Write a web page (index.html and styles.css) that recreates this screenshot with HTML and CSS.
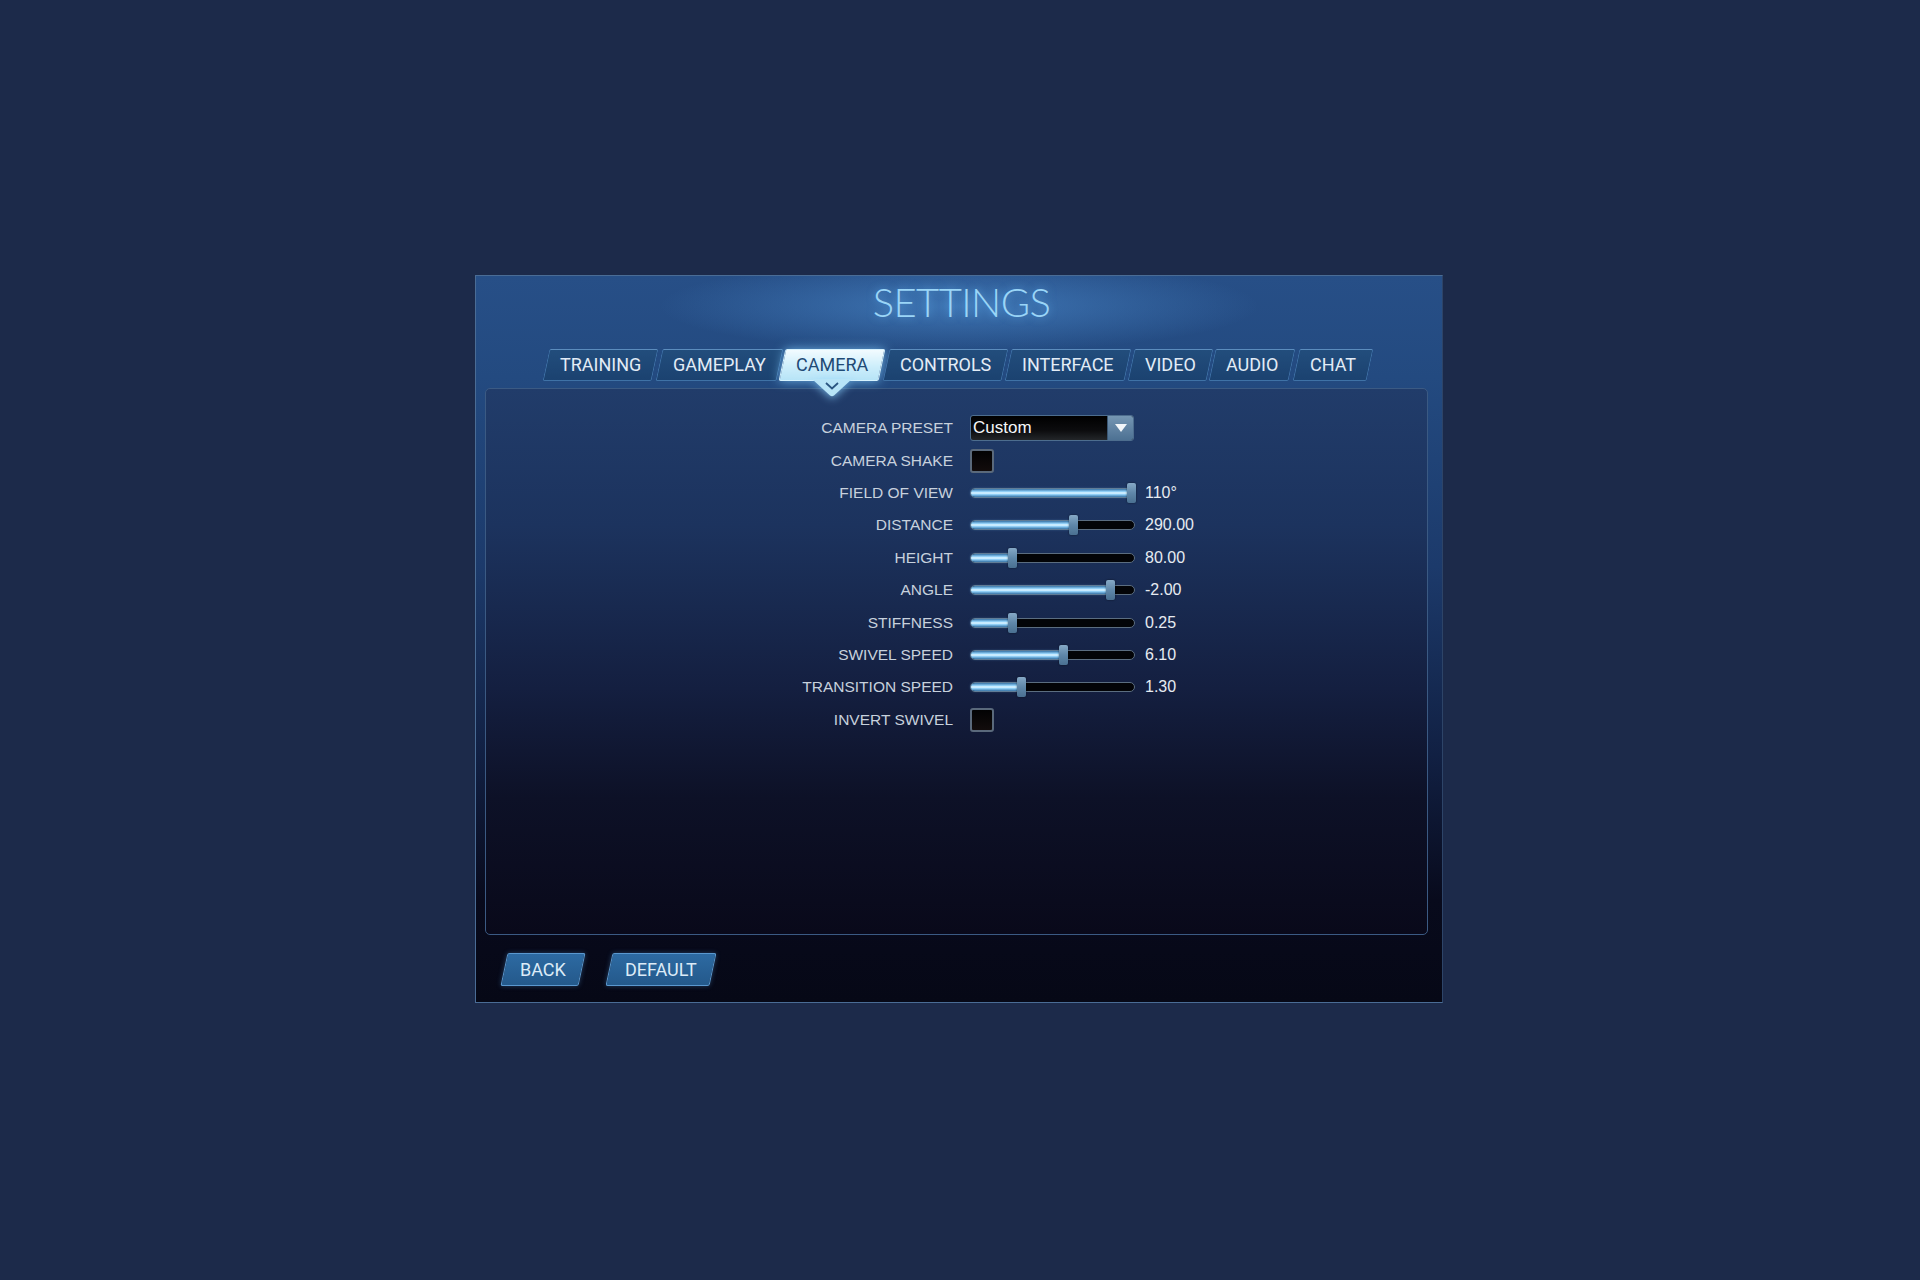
FILE: index.html
```html
<!DOCTYPE html>
<html lang="en">
<head>
<meta charset="utf-8">
<title>Settings</title>
<link rel="stylesheet" href="styles.css">
</head>
<body>
<div class="stage">
  <section class="panel">
    <header class="head">
      <h1 class="title">SETTINGS</h1>
    </header>
    <nav class="tabs">
      <div class="tab"><span class="tab-label">TRAINING</span></div>
      <div class="tab"><span class="tab-label">GAMEPLAY</span></div>
      <div class="tab active"><span class="tab-label">CAMERA<svg class="pointer" width="40" height="18" viewBox="0 0 40 18"><path d="M0 0 H40 L22 16.5 Q20 18 18 16.5 Z" fill="#b7e4f7"/><polyline points="14,4 20,9.5 26,4" fill="none" stroke="#2a5580" stroke-width="1.8"/></svg></span></div>
      <div class="tab"><span class="tab-label">CONTROLS</span></div>
      <div class="tab"><span class="tab-label">INTERFACE</span></div>
      <div class="tab"><span class="tab-label">VIDEO</span></div>
      <div class="tab"><span class="tab-label">AUDIO</span></div>
      <div class="tab"><span class="tab-label">CHAT</span></div>
    </nav>
    <div class="content">
      <div class="rows">
        <div class="row">
          <div class="label">CAMERA PRESET</div>
          <div class="select">
            <span class="select-text">Custom</span>
            <span class="select-btn"><svg width="12" height="8" viewBox="0 0 12 8"><path d="M0 0 H12 L6 8 Z" fill="#f2f6fa"/></svg></span>
          </div>
        </div>
        <div class="row">
          <div class="label">CAMERA SHAKE</div>
          <div class="check"></div>
        </div>
        <div class="row">
          <div class="label">FIELD OF VIEW</div>
          <div class="slider" style="--p:1"><div class="fill"></div><div class="thumb"></div></div>
          <div class="value">110°</div>
        </div>
        <div class="row">
          <div class="label">DISTANCE</div>
          <div class="slider" style="--p:0.63"><div class="fill"></div><div class="thumb"></div></div>
          <div class="value">290.00</div>
        </div>
        <div class="row">
          <div class="label">HEIGHT</div>
          <div class="slider" style="--p:0.242"><div class="fill"></div><div class="thumb"></div></div>
          <div class="value">80.00</div>
        </div>
        <div class="row">
          <div class="label">ANGLE</div>
          <div class="slider" style="--p:0.866"><div class="fill"></div><div class="thumb"></div></div>
          <div class="value">-2.00</div>
        </div>
        <div class="row">
          <div class="label">STIFFNESS</div>
          <div class="slider" style="--p:0.242"><div class="fill"></div><div class="thumb"></div></div>
          <div class="value">0.25</div>
        </div>
        <div class="row">
          <div class="label">SWIVEL SPEED</div>
          <div class="slider" style="--p:0.567"><div class="fill"></div><div class="thumb"></div></div>
          <div class="value">6.10</div>
        </div>
        <div class="row">
          <div class="label">TRANSITION SPEED</div>
          <div class="slider" style="--p:0.30"><div class="fill"></div><div class="thumb"></div></div>
          <div class="value">1.30</div>
        </div>
        <div class="row">
          <div class="label">INVERT SWIVEL</div>
          <div class="check"></div>
        </div>
      </div>
    </div>
    <footer class="foot">
      <div class="btn"><span class="btn-label">BACK</span></div>
      <div class="btn"><span class="btn-label">DEFAULT</span></div>
    </footer>
  </section>
</div>
</body>
</html>
```

FILE: styles.css
```css
html, body {
  margin: 0;
  padding: 0;
}
body {
  background: #1c2a4a;
  width: 1920px;
  height: 1280px;
  font-family: "Liberation Sans", Arial, sans-serif;
}
.stage {
  width: 1920px;
  height: 1280px;
  display: flex;
  align-items: center;
  justify-content: center;
}
.panel {
  box-sizing: border-box;
  width: 968px;
  height: 728px;
  margin-left: -2px;
  margin-top: -2px;
  border: 1px solid #4a6c95;
  border-right-color: #2d4468;
  padding: 0 14px 0 9px;
  display: flex;
  flex-direction: column;
  background:
    radial-gradient(ellipse 300px 46px at 50% 30px, rgba(85, 155, 225, 0.5), rgba(85, 155, 225, 0) 100%),
    linear-gradient(to bottom, #274f87 0%, #234a80 14%, #1c3a6b 40%, #112043 66%, #080a1c 86%, #060816 100%);
}
.head {
  height: 73px;
  display: flex;
  justify-content: center;
  padding-left: 10px;
}
.title {
  margin: 0;
  padding-top: 6px;
  font-family: Lato, "Open Sans", sans-serif;
  font-weight: 300;
  font-size: 40px;
  line-height: 41px;
  letter-spacing: -0.6px;
  color: #9ad5f7;
  text-shadow: 0 0 8px rgba(110, 195, 255, 0.6);
}
.tabs {
  height: 32px;
  display: flex;
  justify-content: center;
  gap: 3px;
  margin-left: 3px;
}
.tab {
  height: 32px;
  box-sizing: border-box;
  transform: skewX(-12deg);
  border: 1px solid #3f72a6;
  border-top-color: #5b8cbd;
  border-radius: 2px;
  background: linear-gradient(to bottom, #224d7c 0%, #1b4270 100%);
}
.tab-label {
  display: block;
  position: relative;
  transform: skewX(12deg);
  padding: 0 13px;
  font-family: Roboto, "Liberation Sans", sans-serif;
  font-size: 18px;
  line-height: 30px;
  color: #e2ecf6;
}
.tab.active {
  border-color: #d6f3ff;
  background: linear-gradient(to bottom, #f2fbff 0%, #cdeefb 55%, #b7e4f7 100%);
  box-shadow: 0 0 10px rgba(130, 205, 255, 0.75);
}
.tab.active .tab-label {
  color: #1f4a75;
}
.pointer {
  position: absolute;
  left: 50%;
  top: 29px;
  margin-left: -20px;
  filter: drop-shadow(0 2px 4px rgba(140, 210, 255, 0.7));
}
.content {
  box-sizing: border-box;
  height: 547px;
  margin-top: 7px;
  border: 1px solid #3b5a83;
  border-radius: 5px;
  background: linear-gradient(to bottom, #213c6a 0%, #1c335e 25%, #141f40 55%, #0d1127 75%, #09091a 100%);
  padding-top: 23px;
}
.rows {
  display: flex;
  flex-direction: column;
}
.row {
  height: 32.4px;
  display: flex;
  align-items: center;
}
.label {
  width: 467px;
  margin-right: 17px;
  text-align: right;
  font-size: 15.5px;
  color: #c7d1dd;
  white-space: nowrap;
}
.select {
  box-sizing: border-box;
  width: 164px;
  height: 26px;
  display: flex;
  border: 1px solid #4d6d8e;
  border-radius: 3px;
  background: linear-gradient(to bottom, #000000 0%, #0c0c0e 60%, #232629 100%);
  overflow: hidden;
}
.select-text {
  flex: 1;
  padding-left: 2px;
  font-size: 17px;
  line-height: 24px;
  color: #f4f6f8;
}
.select-btn {
  width: 25px;
  display: flex;
  align-items: center;
  justify-content: center;
  background: linear-gradient(to bottom, #7596b3 0%, #4d7193 100%);
  border-left: 1px solid #3a5673;
}
.check {
  box-sizing: border-box;
  width: 24px;
  height: 24px;
  border: 2px solid #5a697b;
  border-radius: 3px;
  background: linear-gradient(to bottom, #020203 0%, #120c0c 100%);
}
.slider {
  position: relative;
  box-sizing: border-box;
  width: 165px;
  height: 10px;
  border: 1px solid #5b6d80;
  border-radius: 5px;
  background: #030407;
}
.fill {
  height: 100%;
  width: calc(var(--p) * (100% - 6px) + 4px);
  border-radius: 4px;
  background: linear-gradient(to bottom, #3673a6 0%, #9bd9ff 35%, #e8f8ff 50%, #9bd9ff 65%, #3673a6 100%);
  box-shadow: 0 0 3px rgba(120, 200, 255, 0.5);
}
.thumb {
  position: absolute;
  top: 50%;
  left: calc(var(--p) * (100% - 6px) - 1px);
  width: 9px;
  height: 20px;
  margin-top: -10px;
  border-radius: 2px;
  background: linear-gradient(to bottom, #86a9c6 0%, #5f87a9 50%, #4a7091 100%);
  box-shadow: 0 0 2px rgba(0, 0, 0, 0.6);
}
.value {
  margin-left: 10px;
  font-size: 16px;
  color: #e6ebf1;
  white-space: nowrap;
}
.foot {
  height: 33px;
  margin-top: 18px;
  padding-left: 19px;
  display: flex;
  gap: 27px;
}
.btn {
  height: 33px;
  box-sizing: border-box;
  transform: skewX(-12deg);
  border: 1px solid #5a98cf;
  border-radius: 2px;
  background: linear-gradient(to bottom, #2d6aa2 0%, #24598b 100%);
  box-shadow: 0 0 5px rgba(90, 160, 230, 0.35);
}
.btn-label {
  display: block;
  transform: skewX(12deg);
  padding: 0 15px;
  font-family: Roboto, "Liberation Sans", sans-serif;
  font-size: 18px;
  line-height: 31px;
  color: #dcebf7;
}
```
